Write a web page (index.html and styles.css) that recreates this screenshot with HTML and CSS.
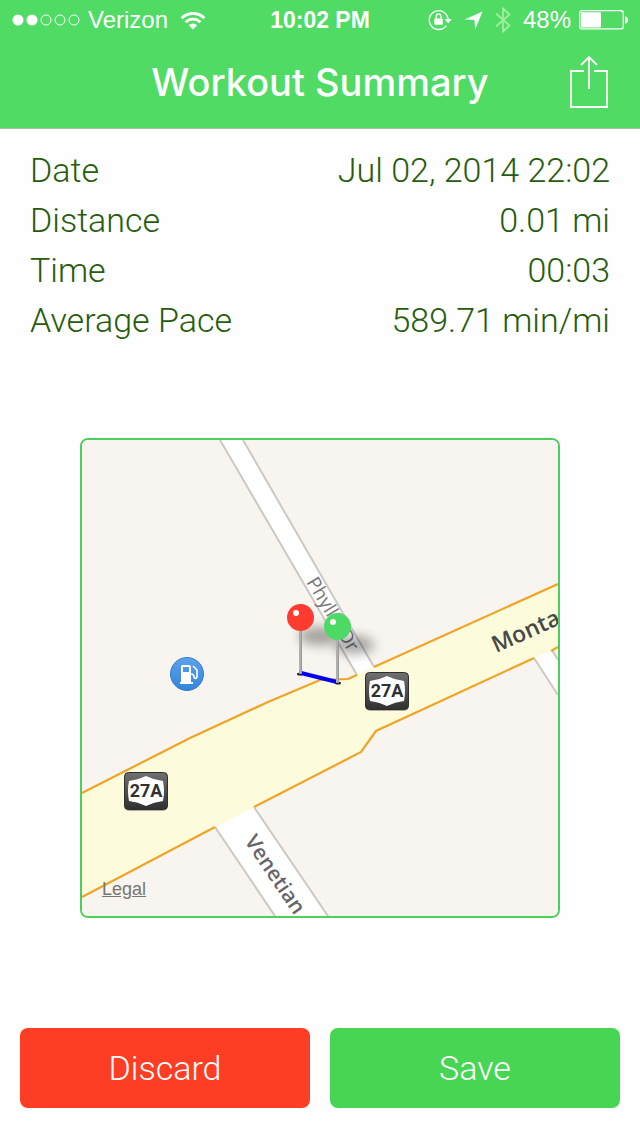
FILE: index.html
```html
<!DOCTYPE html>
<html lang="en">
<head>
<meta charset="utf-8">
<meta name="viewport" content="width=device-width, initial-scale=1.0">
<title>Workout Summary</title>
<link rel="stylesheet" href="styles.css">
</head>
<body>
<header class="header">
    <div class="status-bar">
        <div class="status-left">
            <svg class="signal" width="68" height="12" viewBox="0 0 68 12">
                <circle cx="6" cy="6" r="5.5" fill="#fff"/>
                <circle cx="20" cy="6" r="5.5" fill="#fff"/>
                <circle cx="34" cy="6" r="5" fill="none" stroke="#fff"/>
                <circle cx="48" cy="6" r="5" fill="none" stroke="#fff"/>
                <circle cx="62" cy="6" r="5" fill="none" stroke="#fff"/>
            </svg>
            <span class="carrier">Verizon</span>
            <svg class="wifi" width="26" height="19" viewBox="0 0 26 19">
                <g fill="none" stroke="#fff" stroke-width="2.8">
                    <path d="M1.6 7.2a16.2 16.2 0 0 1 22.8 0"/>
                    <path d="M5.6 11.2a10.5 10.5 0 0 1 14.8 0"/>
                </g>
                <path d="M13 18.6l-4.2-4.3a6 6 0 0 1 8.4 0z" fill="#fff"/>
            </svg>
        </div>
        <span class="clock">10:02 PM</span>
        <div class="status-right">
            <svg width="24" height="22" viewBox="0 0 24 22">
                <path d="M18.3 16.6A9.4 9.4 0 1 1 20 10" fill="none" stroke="#fff" stroke-width="1.4"/>
                <path d="M16.5 10h7.2l-3.6 4.6z" fill="#fff"/>
                <rect x="6.4" y="9.4" width="8.4" height="6.4" rx="0.8" fill="#fff"/>
                <path d="M8.2 9.8V7.6a2.4 2.6 0 0 1 4.8 0v2.2" fill="none" stroke="#fff" stroke-width="1.3"/>
            </svg>
            <svg class="arrow" width="19" height="19" viewBox="0 0 19 19">
                <path d="M18.5 0.5L11.2 18.5L10.4 9L0.5 8.4z" fill="#fff"/>
            </svg>
            <svg class="bluetooth" width="16" height="26" viewBox="0 0 16 26">
                <path d="M1 6.5L14.5 18.5L8 24.5V1.5L14.5 7.5L1 19.5" fill="none" stroke="#a0ef9f" stroke-width="1.8"/>
            </svg>
            <span class="percent">48%</span>
            <svg class="battery" width="49" height="20" viewBox="0 0 49 20">
                <rect x="0.7" y="0.7" width="43.6" height="18.2" rx="2.5" fill="none" stroke="#fff" stroke-width="1.3"/>
                <rect x="2" y="2.2" width="20" height="15.2" rx="1" fill="#fff"/>
                <path d="M46 6.5c4 0 4 7 0 7z" fill="#fff"/>
            </svg>
        </div>
    </div>
    <div class="nav-bar">
        <h1>Workout Summary</h1>
        <button class="share" type="button" aria-label="Share">
            <svg width="38" height="54" viewBox="0 0 38 54">
                <path d="M14 16H1v36h36V16H24M19 34V2M11 10l8-8l8 8" fill="none" stroke="#fff" stroke-width="1.8"/>
            </svg>
        </button>
    </div>
</header>

<main>
    <dl class="summary">
        <div class="row"><dt>Date</dt><dd>Jul 02, 2014 22:02</dd></div>
        <div class="row"><dt>Distance</dt><dd>0.01 mi</dd></div>
        <div class="row"><dt>Time</dt><dd>00:03</dd></div>
        <div class="row"><dt>Average Pace</dt><dd>589.71 min/mi</dd></div>
    </dl>

    <div class="map">
        <svg class="map-canvas" viewBox="0 0 476 476">
            <defs>
                <linearGradient id="fuelFill" x1="0" y1="0" x2="0" y2="1">
                    <stop offset="0" stop-color="#5fa0ea"/>
                    <stop offset="1" stop-color="#3186dc"/>
                </linearGradient>
                <linearGradient id="signFill" x1="0" y1="0" x2="0" y2="1">
                    <stop offset="0" stop-color="#707070"/>
                    <stop offset="1" stop-color="#303030"/>
                </linearGradient>
                <filter id="soft" x="-50%" y="-100%" width="200%" height="300%">
                    <feGaussianBlur stdDeviation="6"/>
                </filter>
                <g id="sign">
                    <rect y="1" width="44" height="38" rx="5" fill="#000" opacity="0.3"/>
                    <rect x="0.5" y="0.5" width="43" height="37" rx="4" fill="url(#signFill)" stroke="#2f2f2f"/>
                    <path d="M22 4Q14 8 5 9Q3 19 5 29Q14 30 22 34Q30 30 39 29Q41 19 39 9Q30 8 22 4z" fill="#fff"/>
                </g>
            </defs>
            <rect width="476" height="476" fill="#f8f4ef"/>

            <!-- side streets -->
            <g fill="#fff">
                <path d="M138 0H161L292 227L275 235z"/>
                <path d="M133 387L172 367L246 476H193z"/>
                <path d="M452 218L470 210L476 220V255z"/>
            </g>
            <path d="M138 0L275 235M161 0L292 227M133 387L193 476M172 367L246 476M452 218L476 255M470 210L476 220" fill="none" stroke="#ccc8c3" stroke-width="2"/>

            <!-- main road -->
            <path d="M0 353L108 298L186 262L238 240L266 239L292 227L476 144V207L294 291L279 312L172 367L133 387L0 457z" fill="#fcfcdc"/>
            <path d="M0 353L108 298L186 262L238 240L266 239L275 235M292 227L476 144M0 457L133 387M172 367L279 312L294 291L452 218M469 211L476 207" fill="none" stroke="#f0a426" stroke-width="2.2"/>

            <text class="street" transform="translate(224 142) rotate(59)">Phyllis Dr</text>
            <text class="road" transform="translate(414 213) rotate(-24)">Monta</text>
            <text class="avenue" transform="translate(162 401) rotate(56)">Venetian</text>

            <!-- fuel station -->
            <circle cx="105" cy="234" r="16.5" fill="url(#fuelFill)" stroke="#397dce"/>
            <path d="M100 225h7q2 0 2 2v15h2v2H98v-2h1v-15q0-2 1-2zm1 2v5h6v-5z" fill="#fff" fill-rule="evenodd"/>
            <path d="M109 234q3 0 3 3q1 3 3 0V230L111 226" fill="none" stroke="#fff" stroke-width="1.6"/>

            <use href="#sign" x="42" y="332"/>
            <text class="sign-text" x="64" y="357">27A</text>
            <use href="#sign" x="283" y="232"/>
            <text class="sign-text" x="305" y="257">27A</text>

            <!-- route and pins -->
            <ellipse cx="237" cy="196" rx="20" ry="9" fill="#000" opacity="0.35" filter="url(#soft)"/>
            <ellipse cx="272" cy="205" rx="20" ry="9" fill="#000" opacity="0.35" filter="url(#soft)"/>
            <ellipse cx="218" cy="234" rx="3" ry="1.5" fill="#222"/>
            <ellipse cx="256" cy="243" rx="3" ry="1.5" fill="#222"/>
            <path d="M219 233L255 242" stroke="#0000f0" stroke-width="4"/>
            <path d="M218.5 188V234M255.5 198V243" stroke="#999" stroke-width="3"/>
            <path d="M218 190V233M255 200V242" stroke="#c5c5c5"/>
            <circle cx="218.5" cy="177.5" r="13.5" fill="#ff3b30"/>
            <circle cx="214" cy="173" r="3" fill="#fff"/>
            <circle cx="255.5" cy="186.5" r="13.5" fill="#4cd964"/>
            <circle cx="251" cy="182" r="3" fill="#fff"/>
        </svg>
        <a class="legal" href="#">Legal</a>
    </div>
</main>

<footer class="actions">
    <button class="discard" type="button">Discard</button>
    <button class="save" type="button">Save</button>
</footer>
</body>
</html>
```
FILE: styles.css
```css
* {
    box-sizing: border-box;
}

body {
    margin: 0;
    min-height: 100vh;
    display: flex;
    flex-direction: column;
    background-color: #fefefe;
    font-family: Roboto, "Liberation Sans", sans-serif;
    color: #265c0c;
}

button {
    border: none;
    padding: 0;
    font-family: inherit;
    cursor: pointer;
}

svg {
    display: block;
    flex-shrink: 0;
}

.header {
    background-color: #4fdb64;
    border-bottom: 1px solid #a5bda8;
    color: #ffffff;
}

.status-bar {
    display: grid;
    grid-template-columns: 1fr auto 1fr;
    align-items: center;
    height: 40px;
    padding: 0 12px;
    font-family: "Liberation Sans", sans-serif;
    font-size: 24px;
}

.status-left, .status-right {
    display: flex;
    align-items: center;
}

.status-left {
    gap: 8px;
}

.wifi {
    margin-left: 4px;
}

.clock {
    font-weight: bold;
    font-size: 23px;
}

.status-right {
    justify-content: flex-end;
    gap: 12px;
}

.battery {
    margin-left: -4px;
}

.nav-bar {
    display: grid;
    grid-template-columns: 1fr auto 1fr;
    align-items: center;
    height: 88px;
    padding: 0 32px 4px;
}

h1 {
    grid-column: 2;
    margin: 0;
    font-family: Inter, "Liberation Sans", sans-serif;
    font-size: 38px;
    line-height: 48px;
    font-weight: 500;
}

.share {
    justify-self: end;
    background: none;
}

.summary {
    margin: 0;
    padding: 16px 30px;
    font-size: 34px;
    font-weight: 300;
    line-height: 50px;
}

.row {
    display: flex;
    justify-content: space-between;
}

dd {
    margin: 0;
}

.map {
    position: relative;
    width: 75%;
    aspect-ratio: 1;
    margin: 77px auto 0;
    border: 2px solid #4bd15a;
    border-radius: 8px;
    overflow: hidden;
}

.map-canvas {
    width: 100%;
    height: 100%;
}

.street {
    font: 19px "Open Sans", sans-serif;
    fill: #77777a;
}

.road {
    font: 600 23px "Open Sans", sans-serif;
    fill: #48484a;
}

.avenue {
    font: 600 21px "Open Sans", sans-serif;
    fill: #66666a;
}

.sign-text {
    font: bold 18px Roboto, sans-serif;
    fill: #303030;
    text-anchor: middle;
}

.legal {
    position: absolute;
    left: 20px;
    bottom: 17px;
    font-family: "Liberation Sans", sans-serif;
    font-size: 18px;
    line-height: 20px;
    color: #77776e;
}

.actions {
    display: flex;
    gap: 20px;
    margin-top: auto;
    padding: 28px 20px;
}

.actions button {
    flex: 1;
    height: 80px;
    border-radius: 8px;
    font-size: 34px;
    font-weight: 300;
    color: #ffffff;
}

.actions .discard {
    background-color: #fd3d24;
}

.actions .save {
    background-color: #46d653;
}
```
